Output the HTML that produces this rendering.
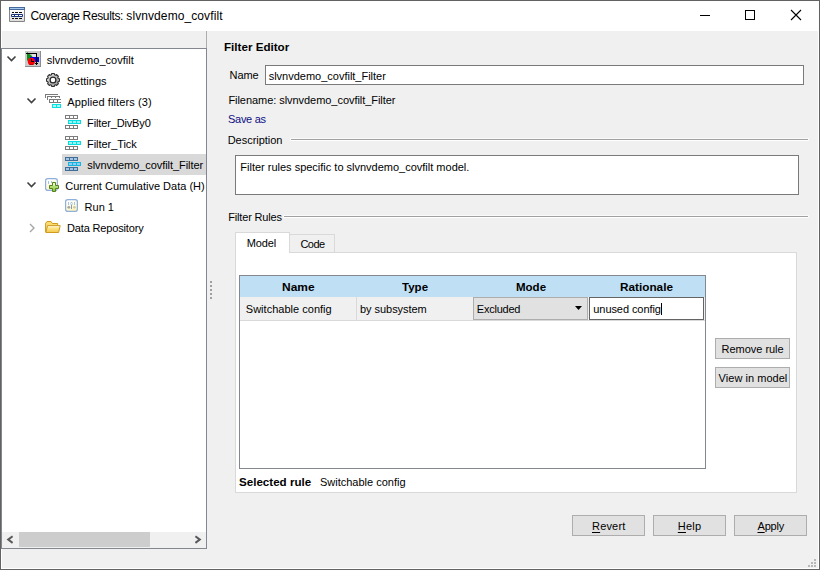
<!DOCTYPE html>
<html><head><meta charset="utf-8"><title>Coverage Results: slvnvdemo_covfilt</title>
<style>
html,body{margin:0;padding:0}
body{width:820px;height:570px;overflow:hidden;background:#f0f0f0;position:relative;font:11px/1 'Liberation Sans',sans-serif;color:#000}
div,span,svg{position:absolute;box-sizing:border-box}
.t{white-space:nowrap;transform-origin:0 0;font:11px/1 'Liberation Sans',sans-serif}
.t u{text-decoration:underline;text-underline-offset:2px;text-decoration-thickness:1px}
.btn{background:#e1e1e1;border:1px solid #adadad}

</style></head>
<body>
<!-- window frame -->
<div style="left:0;top:0;width:820px;height:570px;border:1px solid #626262;background:#fff"></div>
<div style="left:1px;top:1px;width:818px;height:30px;background:#fff"></div>
<div style="left:2px;top:31px;width:816px;height:537px;background:#f0f0f0"></div>
<!-- title icon -->
<svg style="left:9px;top:7px" width="16" height="15" viewBox="0 0 16 15" shape-rendering="crispEdges">
<defs><linearGradient id="tig" x1="0" y1="0" x2="0" y2="1"><stop offset="0" stop-color="#ffffff"/><stop offset="1" stop-color="#dcdcdc"/></linearGradient></defs>
<rect x="0" y="0" width="16" height="15" rx="1" fill="#858585" shape-rendering="auto"/>
<rect x="1" y="3" width="14" height="11" fill="url(#tig)"/>
<rect x="0" y="0" width="16" height="3" fill="#46689a"/>
<rect x="1" y="1" width="14" height="1" fill="#a4cbee"/>
<rect x="2" y="7" width="12" height="3" rx="1" fill="#17367f" shape-rendering="auto"/>
<g fill="#0a0a0a"><rect x="3" y="5" width="2" height="1"/><rect x="6" y="5" width="3" height="1"/><rect x="10" y="5" width="3" height="1"/>
<rect x="3" y="11" width="2" height="1"/><rect x="6" y="11" width="3" height="1"/><rect x="10" y="11" width="3" height="1"/></g>
<g fill="#fff"><rect x="3" y="8" width="2" height="1"/><rect x="6" y="8" width="3" height="1"/><rect x="10" y="8" width="3" height="1"/></g>
</svg>
<!-- title buttons -->
<svg style="left:690px;top:1px" width="128" height="30" viewBox="0 0 128 30" shape-rendering="crispEdges">
<rect x="10" y="14" width="10" height="1" fill="#000"/>
<rect x="55.5" y="9.5" width="9" height="9" fill="none" stroke="#000"/>
<g shape-rendering="auto" stroke="#000" stroke-width="1.1"><path d="M101 9 L111 19 M111 9 L101 19"/></g>
</svg>
<!-- splitter vertical line above tree -->
<div style="left:206px;top:31px;width:1px;height:17px;background:#adadad"></div>
<!-- tree panel -->
<div style="left:1px;top:48px;width:206px;height:501px;border:1px solid #828790;background:#fff"></div>
<div style="left:62px;top:154px;width:144px;height:21px;background:#d9d9d9"></div>
<!-- scrollbar -->
<div style="left:2px;top:532px;width:204px;height:16px;background:#f0f0f0"></div>
<div style="left:19px;top:532px;width:131px;height:15px;background:#cdcdcd"></div>
<svg style="left:2px;top:532px" width="204" height="16" viewBox="0 0 204 16"><path d="M10.6 4.3 L6.2 7.6 L10.6 10.9" fill="none" stroke="#5a5a5a" stroke-width="2"/><path d="M193.4 4.3 L197.8 7.6 L193.4 10.9" fill="none" stroke="#5a5a5a" stroke-width="2"/></svg>
<!-- splitter dots -->
<div style="left:210px;top:281px;width:2px;height:2px;background:#a0a0a0;box-shadow:0 4px #a0a0a0,0 8px #a0a0a0,0 12px #a0a0a0,0 16px #a0a0a0"></div>
<!-- name field -->
<div style="left:265px;top:65px;width:539px;height:20px;border:1px solid #7a7a7a;background:#fff"></div>
<!-- description separator and box -->
<div style="left:290px;top:138px;width:519px;height:3px;background:#fafafa"></div>
<div style="left:291px;top:140px;width:517px;height:1px;background:#fff"></div>
<div style="left:291px;top:139px;width:517px;height:1px;background:#a0a0a0"></div>
<div style="left:235px;top:155px;width:564px;height:40px;border:1px solid #7a7a7a;background:#fff"></div>
<!-- filter rules separator -->
<div style="left:283px;top:215px;width:526px;height:3px;background:#fafafa"></div>
<div style="left:284px;top:217px;width:524px;height:1px;background:#fff"></div>
<div style="left:284px;top:216px;width:524px;height:1px;background:#a0a0a0"></div>
<!-- tab pane -->
<div style="left:235px;top:252px;width:562px;height:241px;border:1px solid #d9d9d9;background:#fff"></div>
<div style="left:289px;top:234px;width:46px;height:19px;border:1px solid #d9d9d9;border-left:none;background:#f0f0f0"></div>
<div style="left:235px;top:232px;width:55px;height:21px;border:1px solid #d9d9d9;border-bottom:none;background:#fff"></div>
<!-- table -->
<div style="left:239px;top:275px;width:467px;height:194px;border:1px solid #828790;background:#fff"></div>
<div style="left:240px;top:276px;width:465px;height:21px;background:#bfdff5"></div>
<div style="left:240px;top:297px;width:465px;height:23px;background:#f0f0f0"></div>
<div style="left:240px;top:320px;width:465px;height:1px;background:#d9d9d9"></div>
<div style="left:356px;top:297px;width:1px;height:23px;background:#d9d9d9"></div>
<!-- combo -->
<div class="btn" style="left:473px;top:297px;width:115px;height:23px"></div>
<svg style="left:575px;top:306px" width="7" height="4" viewBox="0 0 7 4"><path d="M0 0 H7 L3.5 4 Z" fill="#000"/></svg>
<!-- edit -->
<div style="left:589px;top:297px;width:115px;height:23px;border:1px solid #646464;background:#fff"></div>
<div style="left:661px;top:303px;width:1px;height:12px;background:#000"></div>
<!-- side buttons -->
<div class="btn" style="left:715px;top:338px;width:75px;height:21px"></div>
<div class="btn" style="left:715px;top:367px;width:75px;height:21px"></div>
<!-- bottom buttons -->
<div class="btn" style="left:572px;top:515px;width:73px;height:21px"></div>
<div class="btn" style="left:653px;top:515px;width:73px;height:21px"></div>
<div class="btn" style="left:734px;top:515px;width:73px;height:21px"></div>
<!-- size grip -->
<svg style="left:805px;top:556px" width="12" height="12" viewBox="0 0 12 12" shape-rendering="crispEdges" fill="#b8b8b8">
<rect x="9" y="3" width="2" height="2"/><rect x="6" y="6" width="2" height="2"/><rect x="9" y="6" width="2" height="2"/><rect x="3" y="9" width="2" height="2"/><rect x="6" y="9" width="2" height="2"/><rect x="9" y="9" width="2" height="2"/>
</svg>
<!-- tree expanders -->
<svg style="left:2px;top:49px" width="60" height="200" viewBox="0 0 60 200" fill="none" stroke-width="1.6">
<path d="M5.5 7.5 L9.5 11.5 L13.5 7.5" stroke="#404040"/>
<path d="M25.5 49.5 L29.5 53.5 L33.5 49.5" stroke="#404040"/>
<path d="M25.5 133.5 L29.5 137.5 L33.5 133.5" stroke="#404040"/>
<path d="M28 175 L32 179 L28 183" stroke="#a6a6a6" stroke-width="1.4"/>
</svg>
<!-- root model icon -->
<svg style="left:25px;top:51px" width="16" height="16" viewBox="0 0 16 16" shape-rendering="crispEdges">
<rect width="16" height="16" fill="#cacaca"/>
<rect x="15" y="0" width="1" height="16" fill="#8c8c8c"/><rect x="0" y="15" width="16" height="1" fill="#8c8c8c"/>
<rect x="7" y="3" width="4" height="3" fill="#e4e4e4"/>
<path d="M2 1 L2 10 L7.5 5.5 Z" fill="#0c8c18" shape-rendering="auto"/>
<rect x="5" y="6" width="9" height="5" fill="#0000f0"/>
<circle cx="6.4" cy="10.4" r="3.6" fill="#ff0000" shape-rendering="auto"/>
<path d="M4 13.2 H8.8 L7.8 14 H5 Z" fill="#a00000" shape-rendering="auto"/>
<rect x="6" y="8" width="1" height="3" fill="#000"/><rect x="6" y="10" width="3" height="1" fill="#000"/>
<rect x="1" y="2" width="11" height="1" fill="#000"/><rect x="11" y="2" width="1" height="11" fill="#000"/>
<rect x="10" y="12" width="3" height="1" fill="#000"/><rect x="11" y="13" width="1" height="1" fill="#000"/>
</svg>
<!-- settings gear -->
<svg style="left:46px;top:73px" width="14" height="14" viewBox="-7 -7 14 14">
<defs><linearGradient id="gg" x1="0" y1="0" x2="1" y2="1"><stop offset="0" stop-color="#f2f2f2"/><stop offset="1" stop-color="#8e8e8e"/></linearGradient></defs>
<path d="M-1.47 -5.30 L-1.25 -6.48 L1.25 -6.48 L1.47 -5.30 L2.71 -4.79 L3.70 -5.46 L5.46 -3.70 L4.79 -2.71 L5.30 -1.47 L6.48 -1.25 L6.48 1.25 L5.30 1.47 L4.79 2.71 L5.46 3.70 L3.70 5.46 L2.71 4.79 L1.47 5.30 L1.25 6.48 L-1.25 6.48 L-1.47 5.30 L-2.71 4.79 L-3.70 5.46 L-5.46 3.70 L-4.79 2.71 L-5.30 1.47 L-6.48 1.25 L-6.48 -1.25 L-5.30 -1.47 L-4.79 -2.71 L-5.46 -3.70 L-3.70 -5.46 L-2.71 -4.79 Z" fill="url(#gg)" stroke="#303030" stroke-width="1.15" stroke-linejoin="round"/>
<circle r="2.9" fill="#fff" stroke="#262626" stroke-width="1.25"/>
</svg>
<!-- applied filters icon -->
<svg style="left:45px;top:94px" width="17" height="15" viewBox="0 0 17 15" shape-rendering="crispEdges">
<g fill="#7a7a7a">
<rect x="0" y="0" width="13" height="1"/><rect x="0" y="0" width="1" height="4"/>
<rect x="2" y="2" width="13" height="1"/><rect x="2" y="2" width="1" height="4"/>
<rect x="6" y="3" width="1" height="1"/><rect x="10" y="3" width="1" height="1"/><rect x="14" y="3" width="1" height="1"/>
<rect x="4" y="5" width="12" height="1"/><rect x="4" y="8" width="12" height="1"/>
<rect x="4" y="5" width="1" height="4"/><rect x="8" y="5" width="1" height="4"/><rect x="12" y="5" width="1" height="4"/>
</g>
<rect x="7" y="10" width="9" height="4" fill="#00e4e4"/>
<rect x="8" y="11" width="3" height="2" fill="#a8f6f6"/><rect x="12" y="11" width="3" height="2" fill="#a8f6f6"/>
</svg>
<!-- filter icons -->
<svg style="left:65px;top:115px" width="16" height="14" viewBox="0 0 16 14" shape-rendering="crispEdges">
<rect x="0" y="0" width="13" height="4" fill="#7c7c7c"/><g fill="#fff"><rect x="1" y="1" width="3" height="2"/><rect x="5" y="1" width="3" height="2"/><rect x="9" y="1" width="3" height="2"/></g>
<rect x="3" y="5" width="13" height="4" fill="#00e0e0"/><g fill="#9af2f2"><rect x="4" y="6" width="3" height="2"/><rect x="8" y="6" width="3" height="2"/><rect x="12" y="6" width="3" height="2"/></g>
<rect x="0" y="10" width="13" height="4" fill="#7c7c7c"/><g fill="#fff"><rect x="1" y="11" width="3" height="2"/><rect x="5" y="11" width="3" height="2"/><rect x="9" y="11" width="3" height="2"/></g>
</svg>
<svg style="left:65px;top:136px" width="16" height="14" viewBox="0 0 16 14" shape-rendering="crispEdges">
<rect x="0" y="0" width="13" height="4" fill="#7c7c7c"/><g fill="#fff"><rect x="1" y="1" width="3" height="2"/><rect x="5" y="1" width="3" height="2"/><rect x="9" y="1" width="3" height="2"/></g>
<rect x="3" y="5" width="13" height="4" fill="#00e0e0"/><g fill="#9af2f2"><rect x="4" y="6" width="3" height="2"/><rect x="8" y="6" width="3" height="2"/><rect x="12" y="6" width="3" height="2"/></g>
<rect x="0" y="10" width="13" height="4" fill="#7c7c7c"/><g fill="#fff"><rect x="1" y="11" width="3" height="2"/><rect x="5" y="11" width="3" height="2"/><rect x="9" y="11" width="3" height="2"/></g>
</svg>
<svg style="left:65px;top:157px" width="16" height="14" viewBox="0 0 16 14" shape-rendering="crispEdges">
<rect x="0" y="0" width="13" height="4" fill="#3f6f98"/><g fill="#a4c4e2"><rect x="1" y="1" width="3" height="2"/><rect x="5" y="1" width="3" height="2"/><rect x="9" y="1" width="3" height="2"/></g>
<rect x="3" y="5" width="13" height="4" fill="#16b4e0"/><g fill="#8fd0f0"><rect x="4" y="6" width="3" height="2"/><rect x="8" y="6" width="3" height="2"/><rect x="12" y="6" width="3" height="2"/></g>
<rect x="0" y="10" width="13" height="4" fill="#3f6f98"/><g fill="#a4c4e2"><rect x="1" y="11" width="3" height="2"/><rect x="5" y="11" width="3" height="2"/><rect x="9" y="11" width="3" height="2"/></g>
</svg>
<!-- current cumulative icon -->
<svg style="left:45px;top:178px" width="16" height="15" viewBox="0 0 16 15">
<defs><linearGradient id="yg" x1="0" y1="0" x2="0.6" y2="1"><stop offset="0.25" stop-color="#ffffff"/><stop offset="1" stop-color="#fbf3b8"/></linearGradient>
<linearGradient id="pg" x1="0" y1="0" x2="0" y2="1"><stop offset="0" stop-color="#d8f5a8"/><stop offset="1" stop-color="#86c238"/></linearGradient></defs>
<rect x="0.6" y="0.6" width="11.8" height="11.8" rx="2.2" fill="url(#yg)" stroke="#8fb0da" stroke-width="1.2"/>
<g stroke="#a8c4e4" stroke-width="1" fill="none"><path d="M3.5 3V6M6.5 3V5"/></g>
<path d="M7.5 4.5 H10.5 V7.5 H13.5 V10.5 H10.5 V13.5 H7.5 V10.5 H4.5 V7.5 H7.5 Z" fill="url(#pg)" stroke="#54801e" stroke-width="1"/>
<rect x="8.3" y="5" width="1.4" height="2.6" fill="#f4fce4"/>
</svg>
<!-- run icon -->
<svg style="left:65px;top:199px" width="13" height="13" viewBox="0 0 13 13">
<rect x="0.6" y="0.6" width="11.8" height="11.8" rx="2.2" fill="url(#yg)" stroke="#8fb0da" stroke-width="1.2"/>
<g stroke="#a8c4e4" stroke-width="1" fill="none"><path d="M3.5 3V6M9.5 3V6"/></g>
<path d="M6.5 3V10" stroke="#8a98a8" stroke-width="1"/>
<circle cx="6.5" cy="4.6" r="1.1" fill="#eef4fb" stroke="#a8c4e4" stroke-width="0.7"/>
<g fill="#a4a4a4"><circle cx="3.8" cy="8.3" r="1.4"/><circle cx="9.4" cy="8.3" r="1.3" fill="#c8c8b0"/></g>
</svg>
<!-- folder icon -->
<svg style="left:45px;top:220px" width="17" height="14" viewBox="0 0 17 14">
<defs><linearGradient id="fg" x1="0" y1="0" x2="0" y2="1"><stop offset="0" stop-color="#fffdf0"/><stop offset="0.35" stop-color="#fbe58a"/><stop offset="1" stop-color="#f3c84a"/></linearGradient></defs>
<path d="M0.6 12 V3.2 L2 1.5 H6 L7.4 3.5 H12.6 V5.6" fill="#f8dc70" stroke="#cf9a1e" stroke-linejoin="round"/>
<path d="M0.8 12.5 L2.6 5.6 H15.2 L13.6 12.5 Z" fill="url(#fg)" stroke="#cf9a1e" stroke-linejoin="round"/>
</svg>

<span class="t" id="ttl" style="left:30.4px;top:10px;letter-spacing:-0.354px;font-size:12px">Coverage Results:</span>
<span class="t" id="ttl2" style="left:126.3px;top:10px;letter-spacing:0.093px;font-size:12px">slvnvdemo_covfilt</span>
<span class="t" id="t0" style="left:46.7px;top:55px;letter-spacing:0.017px">slvnvdemo_covfilt</span>
<span class="t" id="t1" style="left:66.7px;top:76px;letter-spacing:0.011px">Settings</span>
<span class="t" id="t2" style="left:67.3px;top:97px;letter-spacing:0.098px">Applied filters (3)</span>
<span class="t" id="t3" style="left:87.1px;top:118px;letter-spacing:-0.143px">Filter_DivBy0</span>
<span class="t" id="t4" style="left:87.1px;top:139px;letter-spacing:-0.068px">Filter_Tick</span>
<span class="t" id="t5" style="left:87.2px;top:160px;letter-spacing:-0.060px">slvnvdemo_covfilt_Filter</span>
<span class="t" id="t6" style="left:65.2px;top:181px;letter-spacing:0.006px">Current Cumulative Data (H)</span>
<span class="t" id="t7" style="left:84.6px;top:202px;letter-spacing:-0.003px">Run 1</span>
<span class="t" id="t8" style="left:67.0px;top:223px;letter-spacing:-0.153px">Data Repository</span>
<span class="t" id="fe" style="left:223.7px;top:42px;transform:scaleX(1.0562);font-weight:bold">Filter Editor</span>
<span class="t" id="nm" style="left:229.6px;top:70px;letter-spacing:-0.067px">Name</span>
<span class="t" id="nmv" style="left:268.7px;top:71px;letter-spacing:-0.008px">slvnvdemo_covfilt_Filter</span>
<span class="t" id="fn" style="left:228.4px;top:95px;letter-spacing:-0.050px">Filename: slvnvdemo_covfilt_Filter</span>
<span class="t" id="sa" style="left:228.0px;top:114px;letter-spacing:-0.288px;color:#0f0f84">Save as</span>
<span class="t" id="ds" style="left:227.7px;top:135px;letter-spacing:-0.029px">Description</span>
<span class="t" id="dsv" style="left:240.3px;top:162px;letter-spacing:-0.004px">Filter rules specific to slvnvdemo_covfilt model.</span>
<span class="t" id="fr" style="left:228.2px;top:212px;letter-spacing:-0.165px">Filter Rules</span>
<span class="t" id="tbm" style="left:246.8px;top:238px;letter-spacing:-0.127px">Model</span>
<span class="t" id="tbc" style="left:300.4px;top:239px;letter-spacing:-0.490px">Code</span>
<span class="t" id="hn" style="left:282.0px;top:282px;transform:scaleX(1.0870);font-weight:bold">Name</span>
<span class="t" id="ht" style="left:402.4px;top:282px;transform:scaleX(1.0473);font-weight:bold">Type</span>
<span class="t" id="hm" style="left:516.1px;top:282px;transform:scaleX(1.0464);font-weight:bold">Mode</span>
<span class="t" id="hr" style="left:620.4px;top:282px;transform:scaleX(1.0695);font-weight:bold">Rationale</span>
<span class="t" id="c1" style="left:245.8px;top:304px;letter-spacing:0.017px">Switchable config</span>
<span class="t" id="c2" style="left:360.0px;top:304px;letter-spacing:-0.043px">by subsystem</span>
<span class="t" id="c3" style="left:476.8px;top:304px;letter-spacing:-0.225px">Excluded</span>
<span class="t" id="c4" style="left:593.3px;top:304px;letter-spacing:-0.072px">unused config</span>
<span class="t" id="b1" style="left:721.5px;top:344px;letter-spacing:-0.020px">Remove rule</span>
<span class="t" id="b2" style="left:718.6px;top:373px;letter-spacing:0.034px">View in model</span>
<span class="t" id="sr" style="left:238.9px;top:477px;transform:scaleX(1.0533);font-weight:bold">Selected rule</span>
<span class="t" id="srv" style="left:319.9px;top:477px;letter-spacing:0.004px">Switchable config</span>
<span class="t" id="rv" style="left:592.0px;top:521px;letter-spacing:0.180px"><u>R</u>evert</span>
<span class="t" id="hp" style="left:677.8px;top:521px;letter-spacing:0.228px"><u>H</u>elp</span>
<span class="t" id="ap" style="left:757.5px;top:521px;letter-spacing:-0.188px"><u>A</u>pply</span>
</body></html>
